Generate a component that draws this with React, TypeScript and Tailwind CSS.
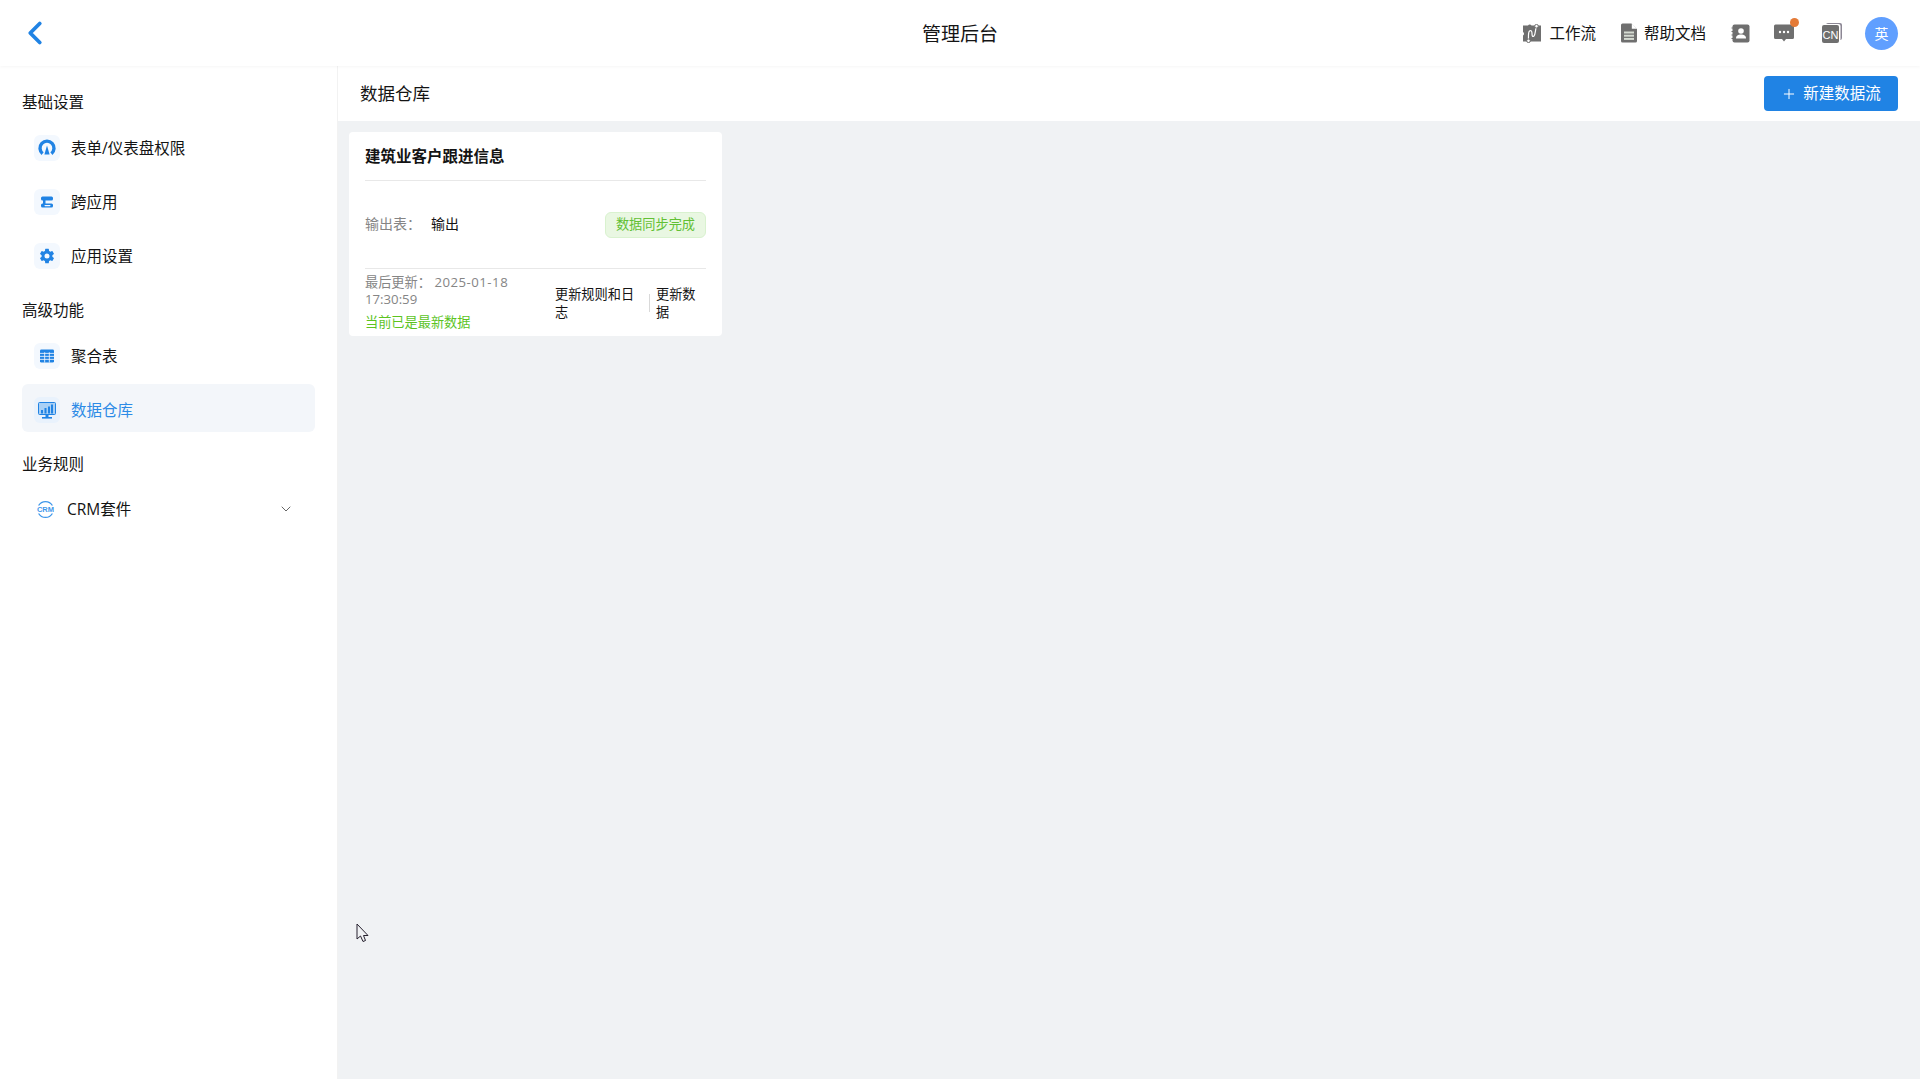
import React from "react";
import { ChevronDown, ChevronLeft, Plus } from "lucide-react";
import { IoSettingsSharp } from "react-icons/io5";

const FONT = "font-['Open_Sans','Noto_Sans_CJK_SC',sans-serif]";

const IconBox: React.FC<{ active?: boolean; children: React.ReactNode }> = ({ active, children }) => (
  <span className={`flex h-[26px] w-[26px] shrink-0 items-center justify-center rounded-md ${active ? "bg-[#e9f2fc]" : "bg-[#f3f8fe]"}`}>
    {children}
  </span>
);

const GaugeIcon = () => (
  <svg width="18" height="18" viewBox="0 0 18 18" fill="none">
    <path d="M4.6 14.6A7 7 0 1 1 13.4 14.6" stroke="#2083e4" strokeWidth="3.4" />
    <path d="M9 6.5L11.6 15.5H6.4Z" fill="#2083e4" />
  </svg>
);

const CrossAppIcon = () => (
  <svg width="14" height="14" viewBox="0 0 14 14" fill="none">
    <rect x="1" y="1.5" width="12" height="4" rx="1.5" fill="#2083e4" />
    <rect x="1" y="8.5" width="12" height="4" rx="1.5" fill="#2083e4" />
    <rect x="3" y="5" width="2.5" height="4" fill="#2083e4" />
    <rect x="4.5" y="10" width="6" height="1.2" rx="0.6" fill="#f3f8fe" />
  </svg>
);

const TableIcon = () => (
  <svg width="14" height="14" viewBox="0 0 15 14">
    <rect width="15" height="14" rx="1.5" fill="#2083e4" />
    <path d="M0 4.2H15M0 7.4H15M0 10.6H15M5 3V14M10 3V14" stroke="#f3f8fe" strokeWidth="0.9" />
  </svg>
);

const MonitorIcon = () => (
  <svg width="18" height="17" viewBox="0 0 18 17">
    <rect x="0.5" y="0.5" width="17" height="12" rx="1" fill="#a9d0f5" stroke="#2083e4" />
    <rect x="3" y="8" width="2" height="3.5" fill="#2083e4" />
    <rect x="6.5" y="6" width="2" height="5.5" fill="#2083e4" />
    <rect x="10" y="4.5" width="2" height="7" fill="#2083e4" />
    <rect x="13" y="2.5" width="2" height="9" fill="#2083e4" />
    <rect x="7.5" y="13" width="3" height="2" fill="#2083e4" />
    <rect x="4" y="15" width="10" height="1.6" fill="#2083e4" />
  </svg>
);

const CrmIcon = () => (
  <svg width="19" height="19" viewBox="0 0 19 19" fill="none" className="shrink-0">
    <path d="M2.6 5.5A8 8 0 0 1 16.4 5.5M2.6 13.5A8 8 0 0 0 16.4 13.5" stroke="#3f97ea" strokeWidth="1.3" />
    <text x="9.5" y="12.2" textAnchor="middle" fontSize="7.5" fontWeight="700" fill="#3f97ea" fontFamily="Liberation Sans, sans-serif">
      CRM
    </text>
  </svg>
);

const WorkflowIcon = () => (
  <svg width="18" height="19" viewBox="0 0 18 19">
    <path d="M0 1.5H5A2 2 0 0 1 8.5 1.5H18V7.5A2 2 0 0 1 18 11V17.5H7.5A2 2 0 0 1 4 17.5H0V11.5A2 2 0 0 0 0 8Z" fill="#6f6f6f" />
    <path d="M5.5 16C5.5 13 5 8.5 6.5 7C8 6 9 7 9 9.5C9 12 9.5 13 11 12C12.5 11 12 6 13.5 3" fill="none" stroke="#fff" strokeWidth="1.2" />
    <circle cx="5.5" cy="16.8" r="1.8" fill="#fff" stroke="#6f6f6f" />
    <circle cx="13.5" cy="2.2" r="1.8" fill="#fff" stroke="#6f6f6f" />
  </svg>
);

const DocIcon = () => (
  <svg width="16" height="20" viewBox="0 0 16 19">
    <path d="M1.5 0H10.5L16 5.5V17.5A1.5 1.5 0 0 1 14.5 19H1.5A1.5 1.5 0 0 1 0 17.5V1.5A1.5 1.5 0 0 1 1.5 0Z" fill="#6f6f6f" />
    <path d="M10.8 0L16 5.2H10.8Z" fill="#fff" />
    <rect x="3" y="8" width="10" height="2" fill="#d5dbd2" />
    <rect x="3" y="11.2" width="10" height="2" fill="#d5dbd2" />
    <rect x="3" y="14.4" width="10" height="2" fill="#d5dbd2" />
  </svg>
);

const ContactIcon = () => (
  <svg width="19" height="19" viewBox="0 0 19 19">
    <rect x="1.5" y="0.5" width="17" height="18" rx="2" fill="#6f6f6f" />
    <path d="M0.5 4H2.5M0.5 7.5H2.5M0.5 11H2.5M0.5 14.5H2.5" stroke="#6f6f6f" strokeWidth="1.2" />
    <circle cx="10" cy="7" r="2.8" fill="#fff" />
    <path d="M5 14.5C5 11.5 7 10.5 10 10.5C13 10.5 15 11.5 15 14.5Z" fill="#fff" />
  </svg>
);

const ChatIcon = () => (
  <span className="relative block h-[20px] w-[20px]">
    <svg width="20" height="20" viewBox="0 0 20 20">
      <path d="M1.5 1.5H18.5A1.5 1.5 0 0 1 20 3V14.5A1.5 1.5 0 0 1 18.5 16H12L10 18.5L8 16H1.5A1.5 1.5 0 0 1 0 14.5V3A1.5 1.5 0 0 1 1.5 1.5Z" fill="#6f6f6f" />
      <circle cx="6" cy="9" r="1.2" fill="#fff" />
      <circle cx="10" cy="9" r="1.2" fill="#fff" />
      <circle cx="14" cy="9" r="1.2" fill="#fff" />
    </svg>
    <span className="absolute -right-[5px] -top-[5px] h-[9px] w-[9px] rounded-full bg-[#e47b38]" />
  </span>
);

const CnIcon = () => (
  <svg width="20" height="20" viewBox="0 0 20 20">
    <rect x="4" y="0" width="16" height="17" rx="2" fill="#8c8794" />
    <rect x="2" y="1" width="16.5" height="17" rx="2" fill="#fff" />
    <rect x="0" y="2" width="17" height="18" rx="2" fill="#6f6f6f" />
    <text x="8.5" y="15.5" textAnchor="middle" fontSize="11" fill="#fff" fontFamily="Liberation Sans, sans-serif">
      CN
    </text>
  </svg>
);

const NavItem: React.FC<{ icon: React.ReactNode; label: string; active?: boolean }> = ({ icon, label, active }) => (
  <div className={`mb-1.5 flex h-12 items-center gap-[11px] rounded-md px-3 text-[15.5px] ${active ? "bg-[#f3f6fa] text-[#2d8be6]" : "text-[#141414]"}`}>
    <span className="mt-1">
      <IconBox active={active}>{icon}</IconBox>
    </span>
    <span className="mt-1.5">{label}</span>
  </div>
);

const SectionLabel: React.FC<{ label: string }> = ({ label }) => (
  <div className="mb-2 h-6 text-[15.5px] leading-6 text-[#141414]">{label}</div>
);

const Sidebar = () => (
  <aside className="w-[338px] shrink-0 border-r border-[#f2f2f2] bg-white px-[22px] pt-6">
    <SectionLabel label="基础设置" />
    <NavItem icon={<GaugeIcon />} label="表单/仪表盘权限" />
    <NavItem icon={<CrossAppIcon />} label="跨应用" />
    <NavItem icon={<IoSettingsSharp size={16} color="#2083e4" />} label="应用设置" />
    <div className="h-3.5" />
    <SectionLabel label="高级功能" />
    <NavItem icon={<TableIcon />} label="聚合表" />
    <NavItem icon={<MonitorIcon />} label="数据仓库" active />
    <div className="h-3.5" />
    <SectionLabel label="业务规则" />
    <div className="flex h-12 items-center gap-3 pl-3.5 pr-[21px] pt-0.5 text-[15.5px] text-[#141414]">
      <CrmIcon />
      <span className="flex-1 pt-0.5">CRM套件</span>
      <ChevronDown size={16} color="#666" strokeWidth={1.5} />
    </div>
  </aside>
);

const DataCard = () => (
  <div className="w-[373px] rounded bg-white px-4 text-[13.2px]">
    <div className="flex h-[49px] items-center border-b border-[#e8e8e8] pt-0.5 text-[15.5px] font-bold text-[#141414]">
      建筑业客户跟进信息
    </div>
    <div className="flex h-[88px] items-center border-b border-[#e8e8e8]">
      <span className="-mt-0.5 w-[66px] text-[14px] text-[#858585]">输出表：</span>
      <span className="-mt-0.5 flex-1 text-[14px] text-[#141414]">输出</span>
      <span className="flex h-[26px] w-[101px] items-center justify-center rounded-md border border-[#d9f2cf] bg-[#e9f7e2] text-[13.2px] text-[#62c034]">
        数据同步完成
      </span>
    </div>
    <div className="flex h-[67px] items-center">
      <div className="w-[191px] pr-10 leading-[17px] text-[#858585]">
        <div className="-mt-px">
          最后更新： <span className="tracking-[0.5px]">2025-01-18</span> 17:30:59
        </div>
        <div className="mt-1.5 text-[#5cc41f]">当前已是最新数据</div>
      </div>
      <div className="flex items-center text-[#141414]">
        <span className="-ml-px w-[94px] pr-2 leading-[18px]">更新规则和日志</span>
        <span className="h-[18px] w-px bg-[#d9d9d9]" />
        <span className="ml-1.5 w-[44px] leading-[18px]">更新数据</span>
      </div>
    </div>
  </div>
);

export default function App() {
  return (
    <div className={`relative flex h-screen w-full flex-col overflow-hidden bg-[#f0f2f4] ${FONT}`}>
      <header className="relative z-10 grid h-[66px] shrink-0 grid-cols-[1fr_auto_1fr] items-center bg-white px-[22px] shadow-[0_1px_3px_rgba(0,0,0,0.04)]">
        <ChevronLeft size={38} color="#2083e4" strokeWidth={2.4} className="-ml-1.5" />
        <div className="pt-0.5 text-center text-[19px] text-[#141414]">管理后台</div>
        <div className="flex items-center justify-end text-[15.5px] text-[#141414]">
          <WorkflowIcon />
          <span className="ml-2 pt-0.5">工作流</span>
          <span className="ml-[25px]">
            <DocIcon />
          </span>
          <span className="ml-[7px] pt-0.5">帮助文档</span>
          <span className="ml-[25px]">
            <ContactIcon />
          </span>
          <span className="ml-[24px]">
            <ChatIcon />
          </span>
          <span className="ml-[28px]">
            <CnIcon />
          </span>
          <span className="ml-[23px] flex h-[33px] w-[33px] items-center justify-center rounded-full bg-[#609fff] text-[14px] text-white">
            英
          </span>
        </div>
      </header>
      <div className="flex min-h-0 flex-1">
        <Sidebar />
        <main className="flex min-w-0 flex-1 flex-col">
          <div className="flex h-[55px] shrink-0 items-center justify-between bg-white px-[22px]">
            <h1 className="text-[17.5px] font-normal text-[#141414]">数据仓库</h1>
            <button className="flex h-[35px] w-[134px] items-center justify-center gap-1.5 rounded bg-[#2083e4] text-[15.5px] text-white">
              <Plus size={16} strokeWidth={1.5} />
              新建数据流
            </button>
          </div>
          <div className="flex-1 pl-[11px] pt-[11px]">
            <DataCard />
          </div>
        </main>
      </div>
      <svg className="absolute left-[356px] top-[923px]" width="14" height="21" viewBox="0 0 14 21">
        <path d="M1 1V16L4.5 13L7 18.5L9.5 17.5L7.5 12.5H12Z" fill="#f0f2f4" stroke="#26212e" strokeWidth="1" />
      </svg>
    </div>
  );
}
